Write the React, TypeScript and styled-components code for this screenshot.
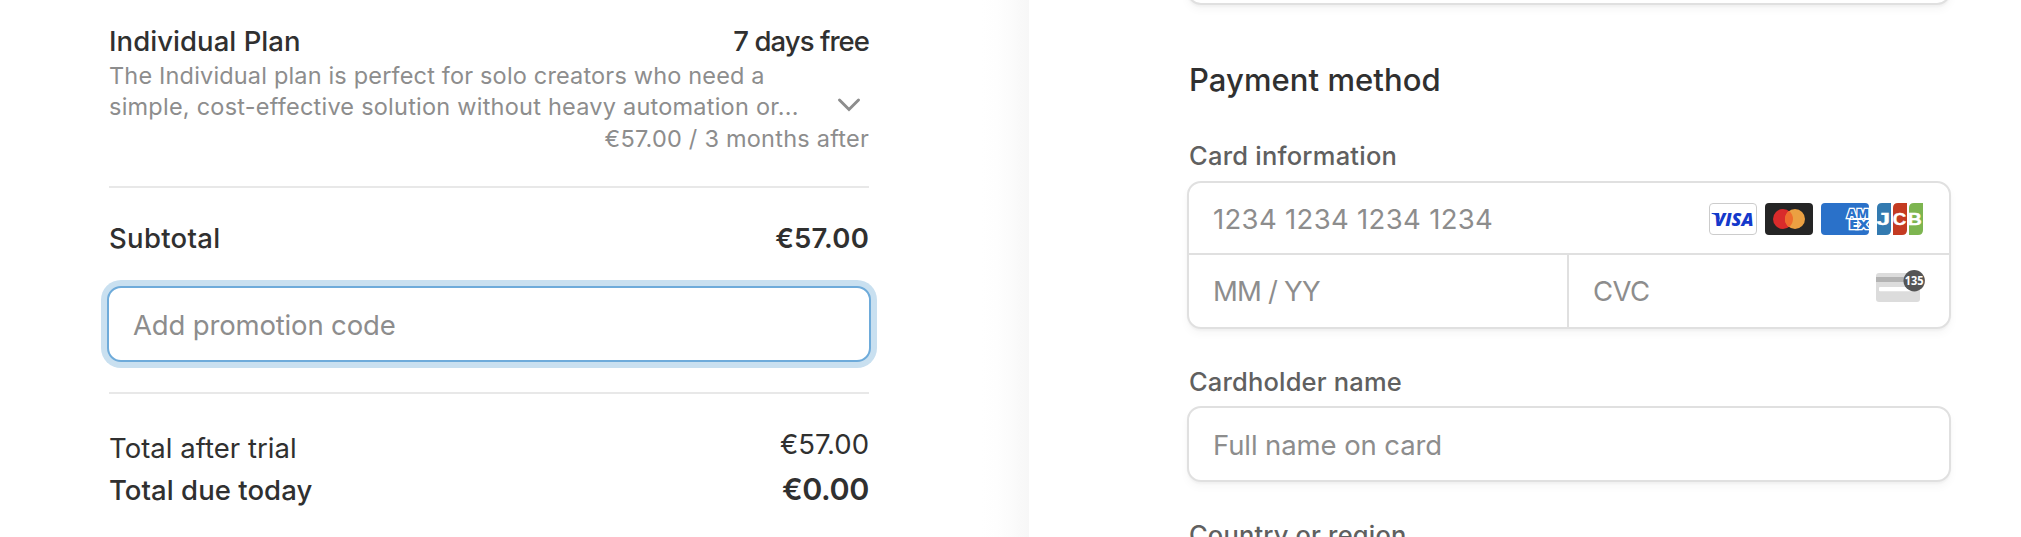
import React from 'react';
import styled, { createGlobalStyle } from 'styled-components';

const GlobalStyle = createGlobalStyle`
  *, *::before, *::after { box-sizing: border-box; }
  body {
    margin: 0;
    overflow: hidden;
    background: #ffffff;
    color: #303030;
    font-family: Inter, "Liberation Sans", sans-serif;
  }
`;

const Page = styled.main`
  display: flex;
  width: 2021px;
  height: 537px;
  overflow: hidden;
`;

const Summary = styled.section`
  display: flex;
  flex-direction: column;
  flex: 0 0 1029px;
  padding: 22px 160px 0 109px;
  background: linear-gradient(
      to left,
      #f7f7f7 0,
      #f9f9f9 9px,
      #fcfcfc 20px,
      #fefefe 32px,
      #ffffff 48px
    )
    right / 48px 100% no-repeat #ffffff;
`;

const Payment = styled.section`
  display: flex;
  flex-direction: column;
  flex: 1;
  padding: 0 70px 0 158px;
  background: #ffffff;
`;

type TextProps = {
  $size?: number;
  $line?: number;
  $weight?: number;
  $spacing?: number;
};

const Text = styled.span<TextProps>`
  font-size: ${(p) => p.$size ?? 27.5}px;
  line-height: ${(p) => p.$line ?? 36}px;
  font-weight: ${(p) => p.$weight ?? 400};
  letter-spacing: ${(p) => p.$spacing ?? 0}px;
  white-space: nowrap;
`;

const Row = styled.div<{ $gap?: number }>`
  display: flex;
  flex-shrink: 0;
  justify-content: space-between;
  align-items: flex-start;
  margin-top: ${(p) => p.$gap ?? 0}px;
`;

const Description = styled.button`
  display: flex;
  flex-shrink: 0;
  justify-content: space-between;
  align-items: flex-end;
  padding: 0 8px 0 0;
  border: 0;
  background: none;
  color: #8d8d8d;
  font-family: inherit;
  text-align: left;
`;

const DescriptionLines = styled.span`
  display: flex;
  flex-direction: column;
`;

const Chevron = styled.svg`
  width: 24px;
  height: 16px;
  margin-bottom: 9px;
`;

const Renewal = styled.div`
  display: flex;
  flex-shrink: 0;
  justify-content: flex-end;
  color: #8d8d8d;
`;

const Divider = styled.hr<{ $gap: number }>`
  flex-shrink: 0;
  width: 100%;
  height: 2px;
  margin: ${(p) => p.$gap}px 0 0;
  border: 0;
  background: #e8e8e8;
`;

const fieldShadow = '0 2px 2px rgba(0,0,0,0.03), 0 5px 8px rgba(0,0,0,0.035)';

const Field = styled.div<{ $focused?: boolean }>`
  display: flex;
  flex-shrink: 0;
  align-items: center;
  height: 76px;
  padding: 2px 24px 0;
  border: 2px solid ${(p) => (p.$focused ? '#6eabda' : '#e0e0e0')};
  border-radius: 14px;
  background: #ffffff;
  box-shadow: ${(p) => (p.$focused ? '0 0 0 6px #c9e0f0' : fieldShadow)};
  color: #8d8d8d;
`;

const PromoField = styled(Field)`
  margin: 30px -2px 0;
`;

const AddressField = styled(Field)`
  margin-top: -71px;
`;

const NameField = styled(Field)`
  margin-top: 8px;
`;

const Heading = styled.h2`
  flex-shrink: 0;
  margin: 55px 0 0 2px;
  font-size: 31px;
  line-height: 40px;
  font-weight: 500;
  letter-spacing: 0.07px;
`;

const Label = styled.label<{ $gap: number; $spacing: number }>`
  flex-shrink: 0;
  margin: ${(p) => p.$gap}px 0 0 2px;
  color: #606060;
  font-size: 25.5px;
  line-height: 32px;
  font-weight: 500;
  letter-spacing: ${(p) => p.$spacing}px;
`;

const CardBox = styled.div`
  display: grid;
  flex-shrink: 0;
  grid-template-columns: 380px 380px;
  grid-template-rows: 72px 72px;
  margin-top: 9px;
  border: 2px solid #e0e0e0;
  border-radius: 14px;
  background: #ffffff;
  box-shadow: ${fieldShadow};
  color: #8d8d8d;
`;

const Cell = styled.div`
  display: flex;
  align-items: center;
  justify-content: space-between;
  padding: 0 24px;
`;

const NumberCell = styled(Cell)`
  grid-column: 1 / -1;
  box-shadow: inset 0 -2px 0 #e0e0e0;
`;

const ExpiryCell = styled(Cell)`
  border-right: 2px solid #e0e0e0;
`;

const Brands = styled.div`
  display: flex;
  gap: 8px;
`;

const Brand = styled.svg`
  display: block;
  width: 48px;
  height: 32px;
`;

const CvcArt = styled.svg`
  display: block;
  width: 49px;
  height: 44px;
`;

const Visa = () => (
  <Brand viewBox="0 0 48 32">
    <rect x="0.5" y="0.5" width="47" height="31" rx="3.5" fill="#fff" stroke="#cccccc" />
    <path d="M2.6 10H8.2Q9.600 10 10 11.400L11 17Q8.400 12 2.6 10.800Z" fill="#1439cb" />
    <text x="5.200" y="22.600" textLength="39.300" lengthAdjust="spacingAndGlyphs" fill="#1439cb" fontFamily="Open Sans, sans-serif" fontSize="17.800" fontWeight="800" fontStyle="italic">VISA</text>
  </Brand>
);

const Mastercard = () => (
  <Brand viewBox="0 0 48 32">
    <rect width="48" height="32" rx="4" fill="#252525" />
    <circle cx="18" cy="16" r="10" fill="#d92b2b" />
    <circle cx="30" cy="16" r="10" fill="#eba042" />
    <path d="M24 8a10 10 0 0 1 0 16a10 10 0 0 1 0-16Z" fill="#ee6c2d" />
  </Brand>
);

const Amex = () => (
  <Brand viewBox="0 0 48 32">
    <clipPath id="amexClip"><rect width="48" height="32" rx="4" /></clipPath>
    <g clipPath="url(#amexClip)">
      <rect width="48" height="32" fill="#2a71c9" />
      <g fill="#2a71c9" stroke="#fff" strokeWidth="2.400" paintOrder="stroke" fontFamily="Open Sans, sans-serif" fontWeight="800" fontSize="12">
        <text x="26" y="14.800" textLength="22" lengthAdjust="spacingAndGlyphs">AM</text>
        <text x="28" y="26" textLength="20.500" lengthAdjust="spacingAndGlyphs">EX</text>
      </g>
    </g>
  </Brand>
);

const Jcb = () => (
  <Brand viewBox="0 0 48 32">
    <path d="M5 0H14V27Q14 32 9 32H0V5Q0 0 5 0Z" fill="#337ab0" />
    <path d="M21 0H30V27Q30 32 25 32H16V5Q16 0 21 0Z" fill="#c43b22" />
    <path d="M37 0H46V27Q46 32 41 32H32V5Q32 0 37 0Z" fill="#7db550" />
    <g fill="#fff" stroke="#fff" strokeWidth="0.400" fontFamily="Liberation Sans, sans-serif" fontWeight="700" fontSize="16">
      <text x="-0.500" y="21.500" textLength="13.500" lengthAdjust="spacingAndGlyphs">J</text>
      <text x="15.800" y="21.500" textLength="13.500" lengthAdjust="spacingAndGlyphs">C</text>
      <text x="30.800" y="21.500" textLength="14" lengthAdjust="spacingAndGlyphs">B</text>
    </g>
  </Brand>
);

const CvcIcon = () => (
  <CvcArt viewBox="0 0 49 44">
    <rect x="0" y="4" width="44" height="29" rx="3" fill="#dcdcdc" />
    <rect x="0" y="8" width="44" height="5" fill="#b3b3b3" />
    <rect x="3" y="18" width="36" height="4.300" rx="1" fill="#fff" />
    <circle cx="38.200" cy="11.700" r="10.700" fill="#555555" />
    <text x="28.800" y="16.300" textLength="18.800" lengthAdjust="spacingAndGlyphs" fill="#fff" fontFamily="Noto Sans, sans-serif" fontSize="13" fontWeight="700">135</text>
  </CvcArt>
);

export default function App() {
  return (
    <Page>
      <GlobalStyle />
      <Summary>
        <Row>
          <Text $weight={500} $line={38} $spacing={0.05}>Individual Plan</Text>
          <Text $weight={500} $line={38} $spacing={-0.94}>7 days free</Text>
        </Row>
        <Description>
          <DescriptionLines>
            <Text $size={23.5} $line={31} $spacing={0.17}>The Individual plan is perfect for solo creators who need a</Text>
            <Text $size={23.5} $line={31} $spacing={0.23}>simple, cost-effective solution without heavy automation or...</Text>
          </DescriptionLines>
          <Chevron viewBox="0 0 24 16" fill="none" stroke="#8d8d8d" strokeWidth="3" strokeLinecap="round" strokeLinejoin="miter">
            <path d="M2.500 3L12 12.500L21.500 3" />
          </Chevron>
        </Description>
        <Renewal>
          <Text $size={23.5} $line={34} $spacing={0.23}>€57.00 / 3 months after</Text>
        </Renewal>
        <Divider $gap={30} />
        <Row $gap={32}>
          <Text $weight={500} $spacing={0.3}>Subtotal</Text>
          <Text $weight={600} $spacing={0.2}>€57.00</Text>
        </Row>
        <PromoField $focused>
          <Text $spacing={-0.16}>Add promotion code</Text>
        </PromoField>
        <Divider $gap={30} />
        <Row $gap={36}>
          <Text $spacing={0.03}>Total after trial</Text>
          <Text $line={28} $spacing={0}>€57.00</Text>
        </Row>
        <Row $gap={5}>
          <Text $weight={500} $line={38} $spacing={0.05}>Total due today</Text>
          <Text $weight={600} $size={30.5} $line={36} $spacing={-0.4}>€0.00</Text>
        </Row>
      </Summary>
      <Payment>
        <AddressField />
        <Heading>Payment method</Heading>
        <Label $gap={40} $spacing={0.23}>Card information</Label>
        <CardBox>
          <NumberCell>
            <Text $spacing={0.32}>1234 1234 1234 1234</Text>
            <Brands>
              <Visa />
              <Mastercard />
              <Amex />
              <Jcb />
            </Brands>
          </NumberCell>
          <ExpiryCell>
            <Text $spacing={-0.79}>MM / YY</Text>
          </ExpiryCell>
          <Cell>
            <Text $spacing={-0.57}>CVC</Text>
            <CvcIcon />
          </Cell>
        </CardBox>
        <Label $gap={37} $spacing={0.17}>Cardholder name</Label>
        <NameField>
          <Text $spacing={-0.1}>Full name on card</Text>
        </NameField>
        <Label $gap={37} $spacing={0.17}>Country or region</Label>
      </Payment>
    </Page>
  );
}
